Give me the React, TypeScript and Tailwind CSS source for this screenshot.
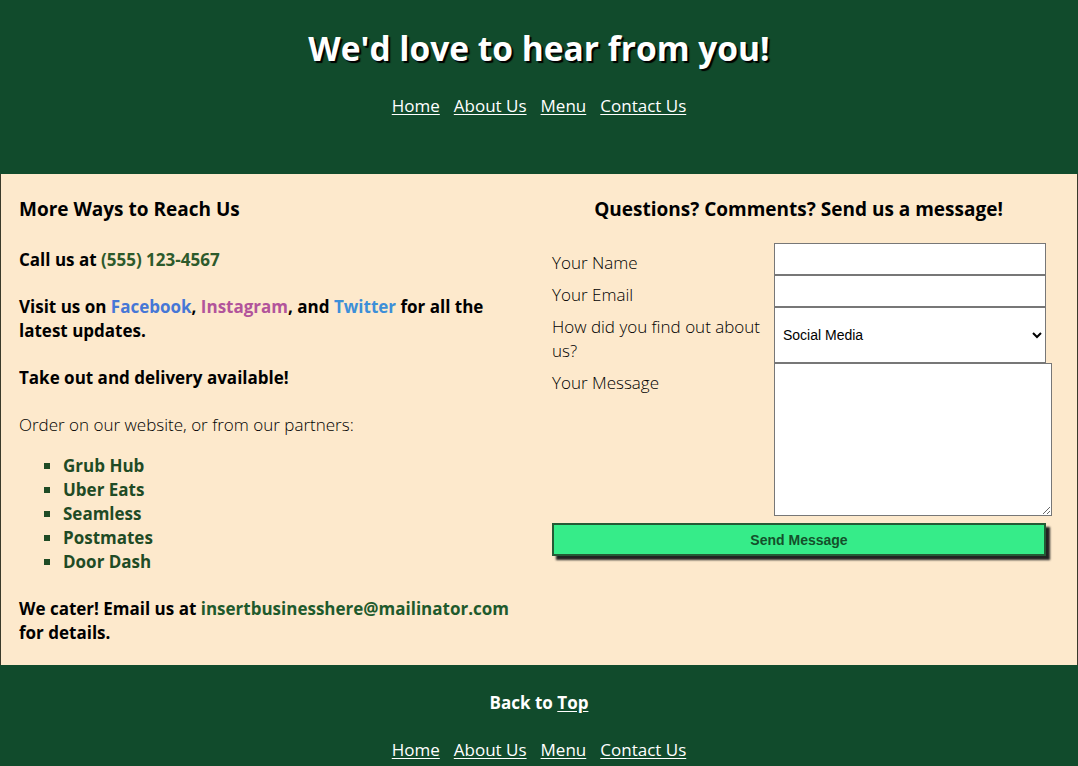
import { useState } from "react";

const navLinks = ["Home", "About Us", "Menu", "Contact Us"];
const partners = ["Grub Hub", "Uber Eats", "Seamless", "Postmates", "Door Dash"];

const Nav = () => (
  <nav className="flex justify-center gap-[14px] text-[17px] leading-[24px]">
    {navLinks.map((link) => (
      <a key={link} href="#" className="text-white underline underline-offset-2">
        {link}
      </a>
    ))}
  </nav>
);

const App = () => {
  const [source, setSource] = useState("social");

  return (
    <div className="min-h-[766px] bg-[#114b2c] font-['Open_Sans',sans-serif] text-black">
      <header className="h-[174px] pt-[22px] text-center">
        <h1 className="text-[33.5px] font-bold leading-[52px] text-white [text-shadow:2px_2px_1px_#000]">
          We'd love to hear from you!
        </h1>
        <div className="mt-[20px]">
          <Nav />
        </div>
      </header>

      <main className="flex gap-[30px] border-x border-[#3a3a2a] bg-[#fde9cc] pb-[20px] pl-[18px] pt-[20px]">
        <section className="w-[500px] text-[17px] leading-[24px]">
          <h2 className="mb-[24px] text-[19px] font-bold leading-[30px]">More Ways to Reach Us</h2>
          <p className="font-bold">
            Call us at <span className="text-[#2d5a2b]">(555) 123-4567</span>
          </p>
          <p className="mt-[23px] font-bold">
            Visit us on <span className="text-[#4677d6]">Facebook</span>,{" "}
            <span className="text-[#b2549b]">Instagram</span>, and{" "}
            <span className="text-[#3d8fd8]">Twitter</span> for all the latest updates.
          </p>
          <p className="mt-[23px] font-bold">Take out and delivery available!</p>
          <p className="mt-[23px] font-light">Order on our website, or from our partners:</p>
          <ul className="mt-[17px] list-[square] pl-[44px] font-bold text-[#1f4b25]">
            {partners.map((p) => (
              <li key={p}>
                <a href="#">{p}</a>
              </li>
            ))}
          </ul>
          <p className="mt-[23px] font-bold">
            We cater! Email us at{" "}
            <span className="text-[#1f5a2c]">insertbusinesshere@mailinator.com</span> for details.
          </p>
        </section>

        <section className="w-[496px] pl-[3px]">
          <h2 className="mb-[19px] text-center text-[19px] font-bold leading-[30px]">
            Questions? Comments? Send us a message!
          </h2>
          <form className="grid grid-cols-[222px_272px] text-[17px] font-light leading-[24px]">
            <label className="pt-[8px]">Your Name</label>
            <input className="h-[32px] border border-[#777] bg-white" />
            <label className="pt-[8px]">Your Email</label>
            <input className="h-[32px] border border-[#777] bg-white" />
            <label className="pr-[4px] pt-[8px]">How did you find out about us?</label>
            <select
              value={source}
              onChange={(e) => setSource(e.target.value)}
              className="h-[56px] border border-[#777] bg-white pl-[4px] font-['Liberation_Sans',sans-serif] text-[14px] font-normal"
            >
              <option value="social">Social Media</option>
              <option value="friend">A Friend</option>
              <option value="search">Search Engine</option>
            </select>
            <label className="pt-[8px]">Your Message</label>
            <textarea className="h-[153px] w-[278px] border border-[#777] bg-white" />
            <button
              type="button"
              className="col-span-2 mt-[7px] h-[33px] border-2 border-[#245a35] bg-[#36ec89] font-['Liberation_Sans',sans-serif] text-[14px] font-bold text-[#14502b] shadow-[4px_4px_2px_#222]"
            >
              Send Message
            </button>
          </form>
        </section>
      </main>

      <footer className="pt-[26px] text-center text-white">
        <p className="text-[17px] font-bold leading-[24px]">
          Back to <a href="#" className="underline underline-offset-2">Top</a>
        </p>
        <div className="mt-[23px]">
          <Nav />
        </div>
      </footer>
    </div>
  );
};

export default App;
